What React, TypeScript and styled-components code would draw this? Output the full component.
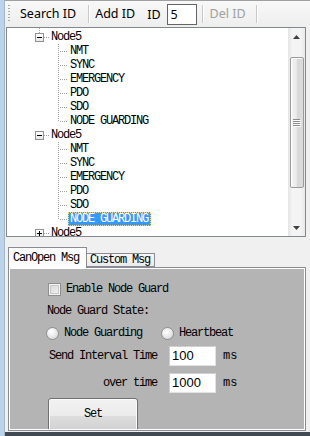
import React from "react";
import styled, { createGlobalStyle } from "styled-components";

const MONO = `"Liberation Mono", "DejaVu Sans Mono", monospace`;
const UI = `"Noto Sans", "Liberation Sans", sans-serif`;
const SANS = `"Liberation Sans", Arial, sans-serif`;

const GlobalStyle = createGlobalStyle`
  html, body { margin: 0; padding: 0; width: 310px; height: 436px; overflow: hidden; background: #f0f0f0; }
  * { box-sizing: border-box; }
`;

const Window = styled.div`
  display: flex;
  width: 310px;
  height: 436px;
`;

const FrameEdge = styled.div`
  width: 5px;
  flex: none;
  background: #bcd3ec;
  border-right: 1px solid #a3b5c8;
`;

const Main = styled.div`
  flex: 1;
  min-width: 0;
  display: flex;
  flex-direction: column;
`;

/* ---------- toolbar ---------- */
const Toolbar = styled.div`
  height: 27px;
  flex: none;
  display: flex;
  align-items: center;
  background: linear-gradient(#f8f8f8, #eeeeee);
  border-top: 1px solid #a0a0a0;
  font: 12.5px ${UI};
  color: #000;
`;

const Gripper = styled.div`
  width: 2px;
  height: 18px;
  margin-left: 3px;
  background: repeating-linear-gradient(to bottom, #a8a8a8 0 1px, transparent 1px 3px);
`;

const ToolButton = styled.div<{ $ml: number; $disabled?: boolean }>`
  margin-left: ${(p) => p.$ml}px;
  padding: 0 6px;
  line-height: 22px;
  white-space: nowrap;
  color: ${(p) => (p.$disabled ? "#a0a0a0" : "#000")};
`;

const ToolSeparator = styled.div<{ $ml: number }>`
  width: 1px;
  height: 18px;
  margin-left: ${(p) => p.$ml}px;
  background: #c8c8c8;
  box-shadow: 1px 0 0 #ffffff;
`;

const ToolLabel = styled.span`
  margin-left: 6px;
  white-space: nowrap;
`;

const ToolInput = styled.div`
  width: 30px;
  height: 21px;
  margin-left: 6px;
  border: 1px solid #646464;
  background: #fff;
  padding-left: 3px;
  line-height: 19px;
`;

/* ---------- tree ---------- */
const Tree = styled.div`
  height: 210px;
  flex: none;
  margin: 0 4px 0 1px;
  border: 1px solid #828790;
  background: #fff;
  display: flex;
`;

const TreeList = styled.div`
  flex: 1;
  overflow: hidden;
  padding-top: 2px;
  font: 12px ${MONO};
  letter-spacing: -1.2px;
  color: #000;
`;

const RootRow = styled.div`
  display: flex;
  align-items: center;
  height: 14px;
  padding-left: 28px;
`;

const ExpanderCell = styled.span<{ $lineUp?: boolean }>`
  position: relative;
  flex: none;
  width: 9px;
  height: 9px;
  &::after {
    content: "";
    display: ${(p) => (p.$lineUp ? "block" : "none")};
    position: absolute;
    left: 4px;
    bottom: 100%;
    width: 1px;
    height: 5px;
    background: repeating-linear-gradient(to top, #a0a0a0 0 1px, transparent 1px 2px);
  }
`;

const Expander = styled.span<{ $open: boolean }>`
  position: relative;
  display: block;
  width: 9px;
  height: 9px;
  border: 1px solid #919191;
  background: linear-gradient(#ffffff, #e8e8e8);
  &::before {
    content: "";
    position: absolute;
    left: 1px;
    top: 3px;
    width: 5px;
    height: 1px;
    background: #000;
  }
  &::after {
    content: "";
    display: ${(p) => (p.$open ? "none" : "block")};
    position: absolute;
    left: 3px;
    top: 1px;
    width: 1px;
    height: 5px;
    background: #000;
  }
`;

const Stub = styled.span`
  flex: none;
  width: 5px;
  height: 1px;
  background: repeating-linear-gradient(to right, #a0a0a0 0 1px, transparent 1px 2px);
`;

const ChildRow = styled.div`
  display: flex;
  align-items: center;
  height: 14px;
  padding-left: 51px;
`;

const Connector = styled.span<{ $last?: boolean }>`
  position: relative;
  flex: none;
  width: 10px;
  height: 14px;
  &::before {
    content: "";
    position: absolute;
    left: 0;
    top: 0;
    width: 1px;
    height: ${(p) => (p.$last ? "7px" : "14px")};
    background: repeating-linear-gradient(to bottom, #a0a0a0 0 1px, transparent 1px 2px);
  }
  &::after {
    content: "";
    position: absolute;
    left: 1px;
    top: 7px;
    width: 9px;
    height: 1px;
    background: repeating-linear-gradient(to right, transparent 0 1px, #a0a0a0 1px 2px);
  }
`;

const NodeLabel = styled.span<{ $selected?: boolean }>`
  height: 14px;
  line-height: 14px;
  padding: 0 3px 0 2px;
  white-space: pre;
  background: ${(p) => (p.$selected ? "#3399ff" : "transparent")};
  color: ${(p) => (p.$selected ? "#fff" : "#000")};
  outline: ${(p) => (p.$selected ? "1px dotted #f3d58c" : "none")};
  outline-offset: -1px;
`;

/* ---------- scrollbar ---------- */
const ScrollBar = styled.div`
  width: 17px;
  flex: none;
  display: flex;
  flex-direction: column;
  background: linear-gradient(to right, #e4e4e4, #f4f4f4 25%, #f4f4f4 75%, #e9e9e9);
`;

const ScrollButton = styled.div`
  height: 17px;
  flex: none;
  display: flex;
  align-items: center;
  justify-content: center;
`;

const Track = styled.div`
  flex: 1;
  display: flex;
  padding: 12px 1px 31px 2px;
`;

const Thumb = styled.div`
  flex: 1;
  display: flex;
  align-items: center;
  justify-content: center;
  border: 1px solid #9a9a9a;
  border-radius: 2px;
  background: linear-gradient(to right, #f6f6f6, #e9e9e9 45%, #d8d8d8 55%, #dcdcdc);
  box-shadow: inset 1px 1px 0 #ffffff;
`;

const Arrow = ({ down }: { down?: boolean }) => (
  <svg width="7" height="4" viewBox="0 0 7 4">
    <polygon points={down ? "0,0 7,0 3.5,4" : "0,4 7,4 3.5,0"} fill="#404040" />
  </svg>
);

const Grip = () => (
  <svg width="8" height="8" viewBox="0 0 8 8">
    {[0, 2, 4, 6].map((y) => (
      <g key={y}>
        <rect x="0" y={y} width="7" height="1" fill="#8a8a8a" />
        <rect x="1" y={y + 1} width="7" height="1" fill="#fdfdfd" />
      </g>
    ))}
  </svg>
);

/* ---------- lower tab area ---------- */
const LowerPane = styled.div`
  flex: 1;
  display: flex;
  flex-direction: column;
  padding: 10px 4px 0 3px;
  background: #f0f0f0;
  font: 12px ${MONO};
  letter-spacing: -1.2px;
  color: #000;
`;

const TabStrip = styled.div`
  height: 20px;
  flex: none;
  display: flex;
  align-items: flex-end;
  position: relative;
  z-index: 1;
`;

const Tab = styled.div<{ $active?: boolean; $w: number }>`
  width: ${(p) => p.$w}px;
  height: ${(p) => (p.$active ? 21 : 14)}px;
  margin-bottom: ${(p) => (p.$active ? -1 : 0)}px;
  display: flex;
  align-items: center;
  padding-left: ${(p) => (p.$active ? 4 : 3)}px;
  padding-bottom: ${(p) => (p.$active ? 1 : 0)}px;
  border: 1px solid #898c95;
  border-bottom: ${(p) => (p.$active ? "none" : "1px solid #898c95")};
  border-left: ${(p) => (p.$active ? "1px solid #898c95" : "none")};
  background: ${(p) => (p.$active ? "#fcfcfc" : "linear-gradient(#f6f6f6, #ebebeb)")};
  white-space: pre;
`;

const Panel = styled.div`
  height: 164px;
  flex: none;
  border: 1px solid #898c95;
`;

const PanelInner = styled.div`
  height: 100%;
  border: 1px solid #ffffff;
  background: #b4b4b4;
  overflow: hidden;
  padding: 13px 0 0 37px;
  display: flex;
  flex-direction: column;
  align-items: flex-start;
`;

const CheckRow = styled.label`
  display: flex;
  align-items: center;
  height: 14px;
  white-space: pre;
`;

const CheckBox = styled.span`
  width: 13px;
  height: 13px;
  margin: 0 5px 0 1px;
  border: 1px solid #8e8f8f;
  background: linear-gradient(135deg, #d6d6d6, #f4f4f4);
  box-shadow: inset 0 0 0 1px #f4f4f4, inset 0 0 0 2px #c8c8c8;
`;

const StateLabel = styled.div`
  margin-top: 8px;
  height: 14px;
  line-height: 14px;
  white-space: pre;
`;

const RadioRow = styled.div`
  margin-top: 8px;
  height: 14px;
  display: flex;
  align-items: center;
  gap: 19px;
  margin-left: -1px;
`;

const RadioOption = styled.label`
  display: flex;
  align-items: center;
  white-space: pre;
`;

const RadioDot = styled.span`
  width: 13px;
  height: 13px;
  margin-right: 5px;
  border-radius: 50%;
  border: 1px solid #8e8f8f;
  background: radial-gradient(circle at 40% 35%, #ffffff 0, #f0f0f0 35%, #cfcfcf 100%);
`;

const FieldRow = styled.div<{ $mt: number }>`
  margin-top: ${(p) => p.$mt}px;
  height: 20px;
  display: flex;
  align-items: center;
`;

const FieldLabel = styled.span`
  width: 110px;
  text-align: right;
  white-space: pre;
`;

const FieldInput = styled.div`
  width: 47px;
  height: 20px;
  margin-left: 12px;
  padding-left: 2px;
  background: #fff;
  border: 1px solid #e2e2e2;
  border-top-color: #cfcfcf;
  border-left-color: #cfcfcf;
  font: 13px ${SANS};
  letter-spacing: 0;
  line-height: 18px;
`;

const Unit = styled.span`
  margin-left: 7px;
  white-space: pre;
  letter-spacing: 0;
`;

const SetButton = styled.div`
  margin: 5px 0 0 1px;
  width: 90px;
  height: 36px;
  flex: none;
  padding-bottom: 4px;
  display: flex;
  align-items: center;
  justify-content: center;
  border: 1px solid #707070;
  border-radius: 3px;
  background: linear-gradient(#f2f2f2 0%, #ebebeb 50%, #dddddd 51%, #cfcfcf 100%);
  box-shadow: inset 0 0 0 1px #fcfcfc;
`;

const BottomEdge = styled.div`
  height: 4px;
  flex: none;
  margin-top: 1px;
  margin-left: -3px;
  margin-right: -4px;
  background: #414a52;
`;

type TreeNode = {
  name: string;
  open: boolean;
  lineUp?: boolean;
  selected?: string;
  children: string[];
};

const CHILDREN = ["NMT", "SYNC", "EMERGENCY", "PDO", "SDO", "NODE GUARDING"];

const nodes: TreeNode[] = [
  { name: "Node5", open: true, lineUp: true, children: CHILDREN },
  { name: "Node5", open: true, selected: "NODE GUARDING", children: CHILDREN },
  { name: "Node5", open: false, children: [] },
];

export default function App() {
  return (
    <>
      <GlobalStyle />
      <Window>
        <FrameEdge />
        <Main>
          <Toolbar>
            <Gripper />
            <ToolButton $ml={4}>Search ID</ToolButton>
            <ToolSeparator $ml={6} />
            <ToolButton $ml={0}>Add ID</ToolButton>
            <ToolLabel>ID</ToolLabel>
            <ToolInput>5</ToolInput>
            <ToolSeparator $ml={5} />
            <ToolButton $ml={1} $disabled>
              Del ID
            </ToolButton>
            <ToolSeparator $ml={4} />
          </Toolbar>

          <Tree>
            <TreeList>
              {nodes.map((n, i) => (
                <React.Fragment key={i}>
                  <RootRow>
                    <ExpanderCell $lineUp={n.lineUp}>
                      <Expander $open={n.open} />
                    </ExpanderCell>
                    <Stub />
                    <NodeLabel>{n.name}</NodeLabel>
                  </RootRow>
                  {n.open &&
                    n.children.map((c, j) => (
                      <ChildRow key={c}>
                        <Connector $last={j === n.children.length - 1} />
                        <NodeLabel $selected={n.selected === c}>{c}</NodeLabel>
                      </ChildRow>
                    ))}
                </React.Fragment>
              ))}
            </TreeList>
            <ScrollBar>
              <ScrollButton>
                <Arrow />
              </ScrollButton>
              <Track>
                <Thumb>
                  <Grip />
                </Thumb>
              </Track>
              <ScrollButton>
                <Arrow down />
              </ScrollButton>
            </ScrollBar>
          </Tree>

          <LowerPane>
            <TabStrip>
              <Tab $active $w={79}>
                CanOpen Msg
              </Tab>
              <Tab $w={68}>Custom Msg</Tab>
            </TabStrip>
            <Panel>
              <PanelInner>
                <CheckRow>
                  <CheckBox />
                  Enable Node Guard
                </CheckRow>
                <StateLabel>Node Guard State:</StateLabel>
                <RadioRow>
                  <RadioOption>
                    <RadioDot />
                    Node Guarding
                  </RadioOption>
                  <RadioOption>
                    <RadioDot />
                    Heartbeat
                  </RadioOption>
                </RadioRow>
                <FieldRow $mt={6}>
                  <FieldLabel>Send Interval Time</FieldLabel>
                  <FieldInput>100</FieldInput>
                  <Unit>ms</Unit>
                </FieldRow>
                <FieldRow $mt={7}>
                  <FieldLabel>over time</FieldLabel>
                  <FieldInput>1000</FieldInput>
                  <Unit>ms</Unit>
                </FieldRow>
                <SetButton>Set</SetButton>
              </PanelInner>
            </Panel>
            <BottomEdge />
          </LowerPane>
        </Main>
      </Window>
    </>
  );
}
